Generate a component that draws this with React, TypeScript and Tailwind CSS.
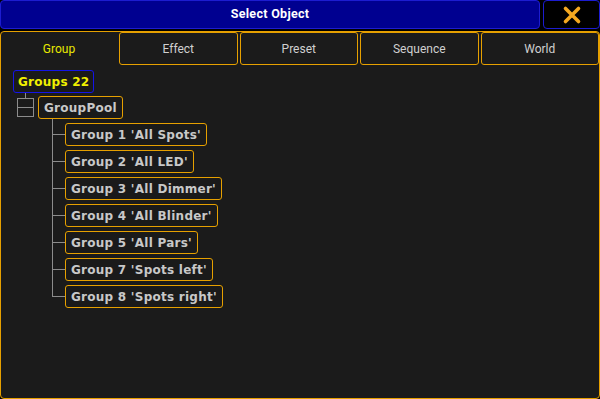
const TABS = ["Group", "Effect", "Preset", "Sequence", "World"];

const GROUPS = [
  "Group 1 'All Spots'",
  "Group 2 'All LED'",
  "Group 3 'All Dimmer'",
  "Group 4 'All Blinder'",
  "Group 5 'All Pars'",
  "Group 7 'Spots left'",
  "Group 8 'Spots right'",
];

const nodeFont = { fontFamily: "'DejaVu Sans', sans-serif" };

export default function App() {
  return (
    <div className="w-[600px] h-[399px] bg-black flex flex-col overflow-hidden">
      {/* Title bar */}
      <div className="flex h-[29px] gap-[3px]">
        <div
          className="flex-1 bg-[#000090] border border-[#1c1cd0] rounded-[4px] flex items-center justify-center text-white text-[12.5px] font-bold tracking-[0.3px]"
          style={{ fontFamily: "Roboto, sans-serif" }}
        >
          Select Object
        </div>
        <div className="w-[57px] bg-black border border-[#1c1cd0] rounded-[4px] flex items-center justify-center">
          <svg width="20" height="20" viewBox="0 0 20 20">
            <path
              d="M3.5 3.5 L16.5 16.5 M16.5 3.5 L3.5 16.5"
              stroke="#f4a820"
              strokeWidth="3.6"
              strokeLinecap="round"
            />
          </svg>
        </div>
      </div>

      {/* Main panel */}
      <div className="mt-[2px] flex-1 border border-[#e6a000] rounded-[4px] bg-[#1b1b1b] flex flex-col">
        <div className="flex h-[33px]" style={{ fontFamily: "Roboto, sans-serif" }}>
          {TABS.map((t, i) =>
            i === 0 ? (
              <div
                key={t}
                className="w-[116px] flex items-center justify-center text-[12px] text-[#e8e800]"
              >
                {t}
              </div>
            ) : (
              <div
                key={t}
                className="flex-1 ml-[2px] border border-[#e6a000] rounded-[3px] bg-[#1b1b1b] flex items-center justify-center text-[12px] text-[#d0d0d0]"
              >
                {t}
              </div>
            )
          )}
        </div>

        {/* Tree */}
        <div className="pl-[12px] pt-[5px] flex flex-col items-start" style={nodeFont}>
          <div className="h-[23px] px-[4px] border border-[#1414e8] rounded-[3px] bg-[#1a1a1a] flex items-center text-[12px] font-bold text-[#f0f000] tracking-[0.25px]">
            Groups 22
          </div>
          <div className="flex items-start">
            <div className="pl-[4px] flex flex-col">
              <div className="ml-[8px] w-px h-[5px] bg-[#8c8c8c]" />
              <div className="w-[17px] h-[19px] border border-[#8c8c8c] flex items-center">
                <div className="w-full h-px bg-[#8c8c8c]" />
              </div>
            </div>
            <div className="mt-[3px] ml-[4px] h-[23px] px-[5px] border border-[#e6a000] rounded-[3px] bg-[#1a1a1a] flex items-center text-[12px] font-bold text-[#c8c8c8] tracking-[0.25px]">
              GroupPool
            </div>
          </div>
          <div className="ml-[39px] flex flex-col">
            <div className="h-[2px] w-px bg-[#8c8c8c]" />
            {GROUPS.map((g, i) => (
              <div key={g} className="h-[27px] flex">
                <div className="w-[13px] flex flex-col">
                  <div className="h-[14px] border-l border-b border-[#8c8c8c]" />
                  {i < GROUPS.length - 1 && <div className="flex-1 border-l border-[#8c8c8c]" />}
                </div>
                <div className="mt-[2px] h-[23px] px-[5px] border border-[#e6a000] rounded-[3px] bg-[#1a1a1a] flex items-center text-[12px] font-bold text-[#c8c8c8] tracking-[0.25px] whitespace-nowrap">
                  {g}
                </div>
              </div>
            ))}
          </div>
        </div>
      </div>
    </div>
  );
}
